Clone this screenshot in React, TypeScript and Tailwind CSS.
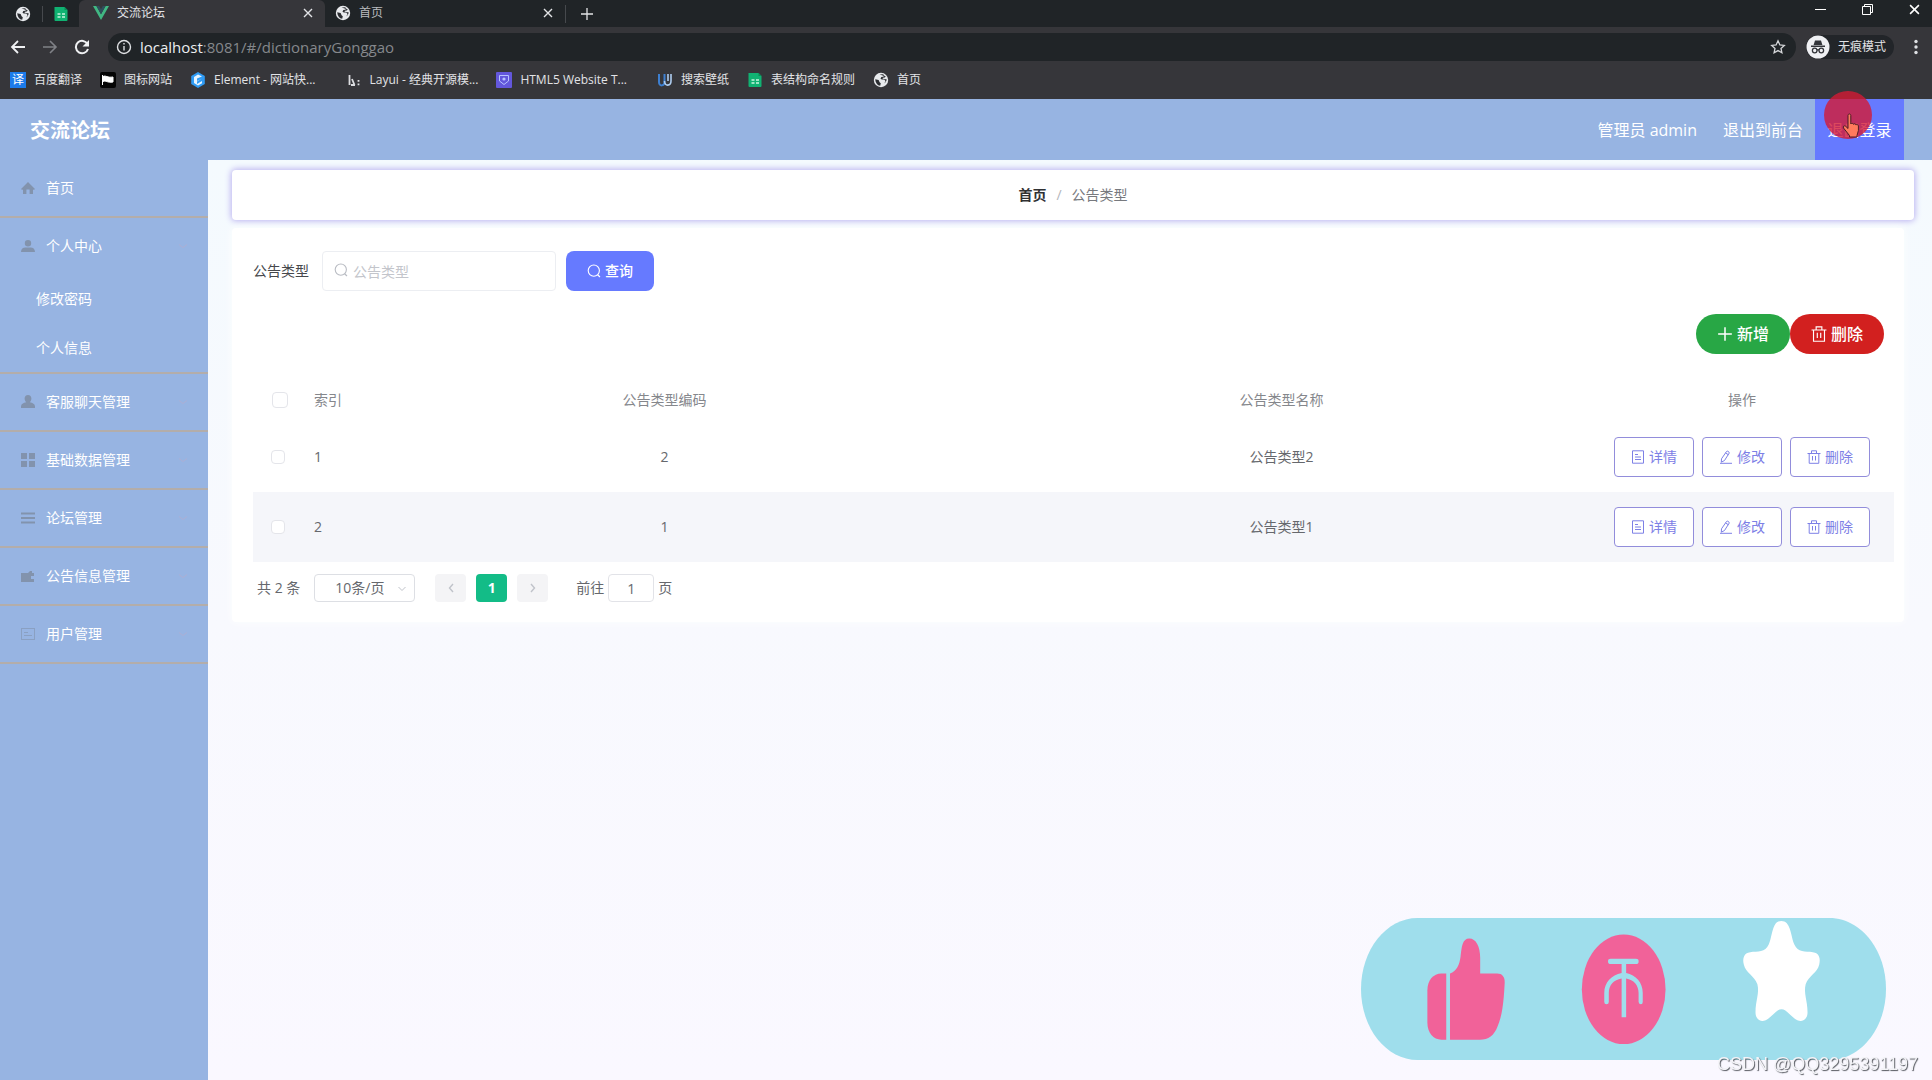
import React from "react";

type IconProps = { className?: string };

const Globe = ({ className = "size-4" }: IconProps) => (
  <svg viewBox="0 0 16 16" className={className} aria-hidden="true">
    <circle cx="8" cy="8" r="7.2" fill="#e8eaed" />
    <path
      d="M2.2 7.2 5.6 8l1 2.2 1.2 1-.6 2.6C4.400 13.400 2.400 11 2.200 7.200ZM6.500 2.400 10 2.300l1.500 1.200-1.300 1.300-1.900.2-.8 1.700 1.300.8 2.600.1 1.200 1.700-1.500 2.300 1.700-1.700 1-2.500-2-.5-2.200-.1.300-1 1.800-.4 1.200-1"
      fill="#2b2d31"
    />
  </svg>
);

const Sheet = ({ className = "size-4" }: IconProps) => (
  <svg viewBox="0 0 16 16" className={className} aria-hidden="true">
    <path d="M2 1h9.500L14.500 4v10a1 1 0 0 1-1 1H2.500a1 1 0 0 1-1-1V1.500z" fill="#10b272" />
    <path d="M11.500 1v3h3z" fill="#0a8a57" />
    <path d="M4.500 8h3M9 8h3M4.500 11h3M9 11h3" stroke="#c8f5df" strokeWidth="1.300" />
  </svg>
);

const Vue = () => (
  <svg viewBox="0 0 16 14" className="h-3.5 w-4" aria-hidden="true">
    <path d="M0 0h3.400L8 8.200 12.600 0H16L8 14z" fill="#41b883" />
    <path d="M3.400 0h2.800L8 3.200 9.800 0h2.800L8 8.200z" fill="#2f4f5c" />
  </svg>
);

const Cross = ({ className = "size-2.5" }: IconProps) => (
  <svg viewBox="0 0 10 10" className={className} aria-hidden="true">
    <path d="m1 1 8 8M9 1 1 9" stroke="currentColor" strokeWidth="1.400" fill="none" />
  </svg>
);

const Plus = ({ className = "size-3.5" }: IconProps) => (
  <svg viewBox="0 0 14 14" className={className} aria-hidden="true">
    <path d="M7 1v12M1 7h12" stroke="currentColor" strokeWidth="1.300" fill="none" />
  </svg>
);

const Search = ({ className = "size-3.5" }: IconProps) => (
  <svg viewBox="0 0 14 14" className={className} aria-hidden="true">
    <circle cx="6.800" cy="6.600" r="5.600" fill="none" stroke="currentColor" strokeWidth="1.100" />
    <path d="m10.600 10.800 2.400 2.200" stroke="currentColor" strokeWidth="1.200" />
  </svg>
);

const Trash = ({ className = "size-3.5" }: IconProps) => (
  <svg viewBox="0 0 14 14" className={className} fill="none" stroke="currentColor" aria-hidden="true">
    <path d="M.5 3.500h13M2.200 3.500v9.800h9.600V3.500M4.500 3.200V.8h5v2.400M5.500 6v4.500M8.500 6v4.500" />
  </svg>
);

const Doc = () => (
  <svg viewBox="0 0 14 14" className="size-3.5" fill="none" stroke="currentColor" aria-hidden="true">
    <path d="M1.500.8h11v12.400h-11zM4 4.500h3M4 7h6M4 9.500h6" />
  </svg>
);

const Pen = () => (
  <svg viewBox="0 0 14 14" className="size-3.5" fill="none" stroke="currentColor" aria-hidden="true">
    <path d="M2.500 8.800 7.500 1.500c.8-1 3 .2 2.700 1.600L5.500 10.500l-3.200 1.700zM6.500 3l2.900 1.700M1 13.300h12" />
  </svg>
);

const sideIcons: Record<string, React.ReactNode> = {
  home: <path d="M7 1 0 8l1.200 1L2 8.300V13h3.400V8.500h3.200V13H12V8.300l.8.700L14 8z" />,
  user: <path d="M7 1a3.200 3.200 0 1 1 0 6.400A3.200 3.200 0 0 1 7 1ZM0 13c0-3 2-4.400 4.500-4.400h5C12 8.600 14 10 14 13z" />,
  chat: <path d="M7 0c2.200 0 3.400 1.700 3.400 3.600 0 1.500-.7 2.900-1.600 3.700 2.900.6 5.200 1.900 5.200 4.100V13H0v-1.600c0-2.200 2.300-3.500 5.200-4.100-.9-.8-1.600-2.200-1.600-3.700C3.600 1.700 4.800 0 7 0Z" />,
  grid: <path d="M0 0h6v6H0zM8 0h6v6H8zM0 8h6v6H0zM8 8h6v6H8z" />,
  list: <path d="M0 1.500h14v2H0zM0 6h14v2H0zM0 10.500h14v2H0z" />,
  wallet: <path d="M0 4h7l2-2h2v2h2v3h-3v3h3v3H0z" />,
  card: <path d="M0 1h14v12H0zm1 1v10h12V2zm2 3h4v1H3zm0 3h8v1H3z" fillRule="evenodd" opacity=".6" />,
};

const SideLink = ({ icon, label, arrow = true }: { icon: string; label: string; arrow?: boolean }) => (
  <a href="#" className="flex h-14 items-center gap-[11px] pr-5 pl-[21px]">
    <svg viewBox="0 0 14 14" className="size-3.5 fill-[#8293ad]" aria-hidden="true">
      {sideIcons[icon]}
    </svg>
    <span className="flex-1">{label}</span>
    {arrow && (
      <svg viewBox="0 0 10 6" className="h-1.5 w-2.5" fill="none" stroke="#acafd4" aria-hidden="true">
        <path d="m1 1.500 4 3 4-3" />
      </svg>
    )}
  </a>
);

const bookmarks: { label: string; wide?: boolean; icon: React.ReactNode }[] = [
  {
    label: "百度翻译",
    icon: (
      <span className="flex size-4 items-center justify-center bg-[#1c7bea] text-xs leading-4 text-white">译</span>
    ),
  },
  {
    label: "图标网站",
    icon: (
      <svg viewBox="0 0 16 16" className="size-4" aria-hidden="true">
        <rect width="16" height="16" rx="2" fill="#050505" />
        <path d="M2.500 3v10M3 4.500c3-1.500 4 1.500 10 .5v5c-6 1-7-2-10-.5z" fill="#fff" stroke="#fff" />
      </svg>
    ),
  },
  {
    label: "Element - 网站快...",
    icon: (
      <svg viewBox="0 0 16 16" className="size-4" aria-hidden="true">
        <path d="m8 0 6.800 4v8L8 16l-6.800-4V4z" fill="#2f9bf4" />
        <path d="M12 4.500 8 2.600 4 5v6l4 2.500 4-2.300V9L7 12V9.500l5-3zM7 6.500l5-2v2L7 9z" fill="#e6f4ff" />
      </svg>
    ),
  },
  {
    label: "Layui - 经典开源模...",
    wide: true,
    icon: (
      <svg viewBox="0 0 16 16" className="size-4" fill="none" stroke="#dcdde0" aria-hidden="true">
        <path d="M3.500 3v10M6 7l2.500 6M5 13h4M12.500 8v1.800M12.500 11.500v1.800" strokeWidth="1.800" />
      </svg>
    ),
  },
  {
    label: "HTML5 Website T...",
    icon: (
      <svg viewBox="0 0 16 16" className="size-4" aria-hidden="true">
        <rect width="16" height="16" rx="1" fill="#6357dc" />
        <path d="M3.500 3.500h9v5.500L8 12.500 3.500 9z" fill="none" stroke="#b7c3ff" />
        <circle cx="8" cy="7" r="1.600" fill="#b7c3ff" />
      </svg>
    ),
  },
  {
    label: "搜索壁纸",
    wide: true,
    icon: (
      <svg viewBox="0 0 16 16" className="size-4" fill="none" aria-hidden="true">
        <path d="M2 2v8c0 5 5.500 4 5.500 0V2" stroke="#3d7fd0" strokeWidth="2" />
        <path d="M7.500 9c0 6 6.500 5 6.500 0V2M11 2v7" stroke="#aecdf0" strokeWidth="1.600" />
      </svg>
    ),
  },
  { label: "表结构命名规则", icon: <Sheet /> },
  { label: "首页", icon: <Globe /> },
];

const Browser = () => (
  <div className="bg-[#36363a] text-xs text-[#e2e3e6]">
    <div className="flex h-[27px] items-center bg-[#202427]">
      <button aria-label="固定标签页" className="flex w-[43px] justify-center border-r border-[#46494d] pl-1">
        <Globe />
      </button>
      <button aria-label="表格标签页" className="flex w-9 justify-center">
        <Sheet />
      </button>
      <div className="flex h-[27px] w-[246px] items-center gap-2 rounded-t-md bg-[#36363a] pr-3 pb-0.5 pl-3.5">
        <Vue />
        <span className="flex-1">交流论坛</span>
        <button aria-label="关闭标签页">
          <Cross />
        </button>
      </div>
      <div className="flex w-[241px] items-center gap-2 border-r border-[#46494d] pr-3 pb-0.5 pl-2.5">
        <Globe />
        <span className="flex-1 text-[#b9bbbe]">首页</span>
        <button aria-label="关闭标签页">
          <Cross />
        </button>
      </div>
      <button aria-label="新标签页" className="px-3.5">
        <Plus />
      </button>
      <div className="ml-auto flex items-center gap-9 pr-3 pb-2 text-white">
        <button aria-label="最小化">
          <svg viewBox="0 0 11 11" className="size-[11px]" aria-hidden="true">
            <path d="M0 5.500h11" stroke="currentColor" />
          </svg>
        </button>
        <button aria-label="还原">
          <svg viewBox="0 0 11 11" className="size-[11px]" fill="none" stroke="currentColor" aria-hidden="true">
            <path d="M.5 2.500h8v8h-8zM2.500 2.500v-2h8v8h-2" />
          </svg>
        </button>
        <button aria-label="关闭窗口">
          <Cross className="size-[11px]" />
        </button>
      </div>
    </div>
    <div className="flex h-10 items-center px-2.5">
      <button aria-label="后退">
        <svg viewBox="0 0 16 16" className="size-4" fill="none" stroke="#f0f1f3" strokeWidth="1.800" aria-hidden="true">
          <path d="M15 8H2M8 2 2 8l6 6" />
        </svg>
      </button>
      <button aria-label="前进" className="ml-4">
        <svg viewBox="0 0 16 16" className="size-4" fill="none" stroke="#808287" strokeWidth="1.600" aria-hidden="true">
          <path d="M1 8h13M8 2l6 6-6 6" />
        </svg>
      </button>
      <button aria-label="刷新" className="ml-4">
        <svg viewBox="0 0 16 16" className="size-4" fill="none" stroke="#f0f1f3" strokeWidth="2" aria-hidden="true">
          <path d="M13.500 5A6.200 6.200 0 1 0 14 10" />
          <path d="M15 1v6.500H8.500z" fill="#f0f1f3" stroke="none" />
        </svg>
      </button>
      <div className="ml-[18px] flex h-7 flex-1 items-center gap-2 rounded-full bg-[#202427] pr-2.5 pl-2">
        <svg viewBox="0 0 16 16" className="size-4" fill="none" stroke="#dfe1e4" strokeWidth="1.400" aria-hidden="true">
          <circle cx="8" cy="8" r="6.500" />
          <path d="M8 7v4.500M8 4v1.600" />
        </svg>
        <div role="textbox" aria-label="地址栏" className="flex-1 text-[15px] leading-5 text-[#85888c]">
          <span className="text-[#eceef0]">localhost</span>:8081/#/dictionaryGonggao
        </div>
        <button aria-label="收藏">
          <svg viewBox="0 0 16 16" className="size-4" fill="none" stroke="#d5d7da" strokeWidth="1.300" aria-hidden="true">
            <path d="m8 1.800 1.900 4.100 4.400.5-3.300 3 .9 4.400L8 11.600l-3.900 2.200.9-4.400-3.300-3 4.400-.5z" />
          </svg>
        </button>
      </div>
      <button className="ml-2.5 flex h-6 items-center gap-2 rounded-full bg-[#222529] pr-2">
        <svg viewBox="0 0 24 24" className="size-6" aria-hidden="true">
          <circle cx="12" cy="12" r="11.500" fill="#eff0f3" />
          <g fill="#33353a">
            <path d="M9 5.500h6l1.400 4.500H7.600zM5 10.500h14V12H5z" />
          </g>
          <g fill="none" stroke="#33353a" strokeWidth="1.300">
            <circle cx="8.700" cy="15.500" r="2.300" />
            <circle cx="15.300" cy="15.500" r="2.300" />
            <path d="M11 15.200c.6-.5 1.400-.5 2 0" />
          </g>
        </svg>
        无痕模式
      </button>
      <button aria-label="菜单" className="mr-1 ml-5">
        <svg viewBox="0 0 4 16" className="h-4 w-1" fill="#dfe1e4" aria-hidden="true">
          <circle cx="2" cy="2.500" r="1.700" />
          <circle cx="2" cy="8" r="1.700" />
          <circle cx="2" cy="13.500" r="1.700" />
        </svg>
      </button>
    </div>
    <nav aria-label="书签" className="flex h-8 items-center gap-[18px] px-2.5 pb-1.5">
      {bookmarks.map((b) => (
        <a key={b.label} href="#" className={b.wide ? "flex items-center gap-2 pl-3" : "flex items-center gap-2"}>
          {b.icon}
          {b.label}
        </a>
      ))}
    </nav>
  </div>
);

const Header = () => (
  <header className="flex h-[61px] items-stretch bg-[#97b4e2] pr-7 pl-[30px] text-white">
    <h1 className="flex-1 self-center pt-0.5 text-xl font-bold">交流论坛</h1>
    <div className="flex items-stretch text-base">
      <span className="flex items-center px-3.5">管理员 admin</span>
      <a href="#" className="flex items-center px-3">
        退出到前台
      </a>
      <a href="#" className="relative flex w-[89px] items-center justify-center bg-[#667aff]">
        退出登录
        <span className="absolute -top-2 left-[9px] size-12 rounded-full bg-[#d41a34]/80" />
        <svg
          viewBox="0 0 20 26"
          className="absolute top-3.5 left-[27px] h-[26px] w-5"
          fill="#ff7a5c"
          stroke="#4a1d25"
          aria-hidden="true"
        >
          <path d="M6 2.500c0-2 2.800-2 2.800 0V11c.6-1.200 2.400-.9 2.600.3.700-.9 2.300-.6 2.500.6.800-.7 2.400-.3 2.500 1v4.600c0 2-1.400 3.200-1.400 5V24H7.500v-1.500L1.500 15c-.9-1.600.8-2.900 2.200-1.700L6 15.500z" />
        </svg>
      </a>
    </div>
  </header>
);

const Sidebar = () => (
  <aside className="w-52 shrink-0 bg-[#97b4e2] text-sm text-white">
    <ul className="[&>li]:border-b-2 [&>li]:border-[#b3adaa]">
      <li>
        <SideLink icon="home" label="首页" arrow={false} />
      </li>
      <li>
        <SideLink icon="user" label="个人中心" />
        <a href="#" className="flex h-[49px] items-center pl-9">
          修改密码
        </a>
        <a href="#" className="flex h-[49px] items-center pl-9">
          个人信息
        </a>
      </li>
      <li>
        <SideLink icon="chat" label="客服聊天管理" />
      </li>
      <li>
        <SideLink icon="grid" label="基础数据管理" />
      </li>
      <li>
        <SideLink icon="list" label="论坛管理" />
      </li>
      <li>
        <SideLink icon="wallet" label="公告信息管理" />
      </li>
      <li>
        <SideLink icon="card" label="用户管理" />
      </li>
    </ul>
  </aside>
);

const RowButton = ({ icon, label }: { icon: React.ReactNode; label: string }) => (
  <button className="flex h-10 w-20 items-center justify-center gap-1 rounded border border-[#928ddb] bg-white text-sm text-[#7d80e6]">
    {icon}
    {label}
  </button>
);

const rows = [
  { index: 1, code: "2", name: "公告类型2" },
  { index: 2, code: "1", name: "公告类型1" },
];

const DataTable = () => (
  <table className="mt-6 w-full table-fixed text-sm text-[#66686d]">
    <colgroup>
      <col className="w-[49px]" />
      <col className="w-[54px]" />
      <col />
      <col />
      <col className="w-[304px]" />
    </colgroup>
    <thead>
      <tr className="h-11 text-[#85878c]">
        <th className="pl-[19px] text-left">
          <input
            type="checkbox"
            aria-label="全选"
            className="block size-4 appearance-none rounded-sm border border-[#e4e5ea] bg-white"
          />
        </th>
        <th className="pl-3 text-left font-normal">索引</th>
        <th className="font-normal">公告类型编码</th>
        <th className="font-normal">公告类型名称</th>
        <th className="font-normal">操作</th>
      </tr>
    </thead>
    <tbody>
      {rows.map((r) => (
        <tr key={r.index} className="h-[70px] text-center even:bg-[#f5f6fa]">
          <td className="pl-[18px]">
            <input
              type="checkbox"
              aria-label={r.name}
              className="block size-3.5 appearance-none rounded-sm border border-[#e4e5ea] bg-white"
            />
          </td>
          <td className="pl-3 text-left">{r.index}</td>
          <td>{r.code}</td>
          <td>{r.name}</td>
          <td>
            <div className="flex justify-center gap-2">
              <RowButton icon={<Doc />} label="详情" />
              <RowButton icon={<Pen />} label="修改" />
              <RowButton icon={<Trash />} label="删除" />
            </div>
          </td>
        </tr>
      ))}
    </tbody>
  </table>
);

const Pagination = () => (
  <div className="mt-3 flex h-7 items-center pl-1 text-sm text-[#66686d]">
    <span>共 2 条</span>
    <div className="relative ml-3.5">
      <select
        aria-label="每页条数"
        defaultValue="10"
        className="block h-7 w-[101px] appearance-none rounded-sm border border-[#dddfe4] bg-white pr-3 pl-5 text-sm"
      >
        <option value="10">10条/页</option>
        <option value="20">20条/页</option>
      </select>
      <svg
        viewBox="0 0 10 6"
        className="pointer-events-none absolute top-3 right-2 h-1.5 w-2.5"
        fill="none"
        stroke="#c0c3ca"
        aria-hidden="true"
      >
        <path d="m1.500 1 3.500 3.500L8.500 1" />
      </svg>
    </div>
    <div className="ml-5 flex gap-2.5">
      <button aria-label="上一页" className="flex h-7 w-[31px] items-center justify-center rounded-sm bg-[#f4f4f6]">
        <svg viewBox="0 0 6 10" className="h-2.5 w-1.5" fill="none" stroke="#c0c3ca" strokeWidth="1.400" aria-hidden="true">
          <path d="M5 1 1.500 5 5 9" />
        </svg>
      </button>
      <button className="h-7 w-[31px] rounded-sm bg-[#13bc87] font-bold text-white">1</button>
      <button aria-label="下一页" className="flex h-7 w-[31px] items-center justify-center rounded-sm bg-[#f4f4f6]">
        <svg viewBox="0 0 6 10" className="h-2.5 w-1.5" fill="none" stroke="#c0c3ca" strokeWidth="1.400" aria-hidden="true">
          <path d="M1 1l3.500 4L1 9" />
        </svg>
      </button>
    </div>
    <label className="ml-7 flex items-center gap-1">
      前往
      <input
        type="text"
        defaultValue="1"
        className="h-7 w-[46px] rounded-sm border border-[#e2e3e8] bg-white text-center text-sm"
      />
      页
    </label>
  </div>
);

const Overlay = () => (
  <div className="fixed right-[46px] bottom-5">
    <svg viewBox="55 80 1392 428" preserveAspectRatio="none" className="block h-[142px] w-[525px]" aria-hidden="true">
      <path
        d="M205 80H1297C1380 80 1447 176 1447 294S1380 508 1297 508H205C122 508 55 412 55 294S122 80 205 80Z"
        fill="#9fdeec"
      />
      <g fill="#f16299">
        <path d="M281 247V447H268C247 447 231 426 231 396V298C231 267 247 247 268 247Z" />
        <path d="M291 247C309 240 316 222 319 196C322 166 324 142 342 142C360 142 371 166 371 200V247H416C429 247 437 257 436 275C433 340 429 375 417 407C408 434 393 447 370 447H291Z" />
        <ellipse cx="751.500" cy="295" rx="111" ry="165" />
      </g>
      <g fill="#9fdeec">
        <rect x="710" y="203" width="81" height="16" rx="7" />
        <path d="M746 217H758V246C784 251 802 276 802 305V333Q802 340 797 340T791 333V306C791 282 778 266 758 262V379H746V262C725 266 712 282 712 306V333Q712 340 706 340T700 333V305C700 276 719 251 746 246Z" />
      </g>
      <path
        d="M1155 96C1162 87 1177 87 1184 96C1196 113 1196 140 1204 160C1213 184 1233 180 1253 183C1270 185 1274 202 1270 220C1265 247 1242 252 1234 280C1228 306 1239 330 1239 365C1239 384 1227 395 1212 388C1196 380 1184 355 1170 355S1144 380 1128 388C1113 395 1101 384 1101 365C1101 330 1112 306 1106 280C1098 252 1075 247 1070 220C1066 202 1070 185 1087 183C1107 180 1127 184 1136 160C1144 140 1144 113 1155 96Z"
        fill="#fff"
      />
    </svg>
  </div>
);

export default function App() {
  return (
    <div className="flex min-h-screen flex-col font-['Open_Sans','Noto_Sans_CJK_SC',sans-serif]">
      <Browser />
      <Header />
      <div className="flex flex-1">
        <Sidebar />
        <main className="min-w-0 flex-1 bg-linear-to-b from-[#f4fafe] via-[#f8f9fe] to-[#faf8ff] pt-2.5 pr-[18px] pl-6">
          <nav
            aria-label="面包屑"
            className="flex h-[50px] items-center justify-center gap-2.5 rounded bg-white text-sm text-[#77797e] shadow-[0_0_6px_1px_#b9b0f0]"
          >
            <a href="#" className="font-bold text-[#303133]">
              首页
            </a>
            <span className="text-[#b4b6bc]">/</span>
            <span>公告类型</span>
          </nav>
          <section className="mt-2 mr-2.5 rounded bg-white px-[21px] pt-[23px] pr-2.5 pb-5 shadow-[0_0_8px_#fdfeff]">
            <form className="flex h-10 items-center text-sm" onSubmit={(e) => e.preventDefault()}>
              <label htmlFor="kind" className="text-[#46484c]">
                公告类型
              </label>
              <div className="relative ml-[13px]">
                <Search className="absolute top-3 left-3 size-3.5 text-[#b9bcc3]" />
                <input
                  id="kind"
                  type="text"
                  placeholder="公告类型"
                  className="block h-10 w-[234px] rounded border border-[#eceef2] bg-white pl-[30px] placeholder:text-[#c3c5cb]"
                />
              </div>
              <button className="ml-2.5 flex h-10 w-[88px] items-center justify-center gap-1 rounded-lg bg-[#667aff] font-medium text-white">
                <Search />
                查询
              </button>
            </form>
            <div className="mt-[23px] flex justify-end pr-2.5 text-base font-medium text-white">
              <button className="flex h-10 w-[94px] items-center justify-center gap-1 rounded-full bg-[#28a745]">
                <Plus className="size-4" />
                新增
              </button>
              <button className="flex h-10 w-[94px] items-center justify-center gap-1 rounded-full bg-[#d2201f]">
                <Trash className="size-4" />
                删除
              </button>
            </div>
            <DataTable />
            <Pagination />
          </section>
        </main>
      </div>
      <Overlay />
      <p className="fixed right-3.5 bottom-1 font-['Liberation_Sans',sans-serif] text-lg leading-6 text-[#f4f4f8] [text-shadow:1px_1px_1px_#55585f]">
        CSDN @QQ3295391197
      </p>
    </div>
  );
}
